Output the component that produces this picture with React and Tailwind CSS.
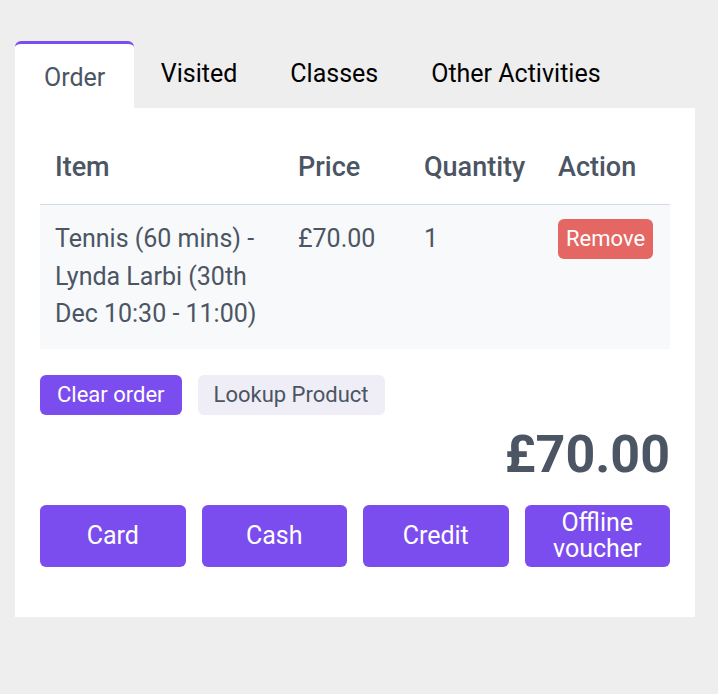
import { useState } from 'react'

const TABS = ['Order', 'Visited', 'Classes', 'Other Activities']
const PAYMENTS = ['Card', 'Cash', 'Credit', 'Offline voucher']

export default function App() {
  const [tab, setTab] = useState('Order')

  return (
    <div className="min-h-[694px] bg-[#eeeeee] pt-[41px] pl-[15px] pr-[23px]" style={{ fontFamily: 'Roboto, "Liberation Sans", sans-serif' }}>
      {/* Tabs */}
      <div className="flex items-end h-[67px]">
        {TABS.map(t => (
          <button
            key={t}
            onClick={() => setTab(t)}
            className={
              tab === t
                ? 'h-[67px] px-[29px] pt-[4px] bg-white border-t-[3px] border-[#7c4dee] rounded-t-[6px] text-[25px] text-[#4b5563]'
                : 'h-[67px] px-[26.5px] pb-[2px] text-[25px] text-black'
            }
          >
            {t}
          </button>
        ))}
      </div>

      {/* Panel */}
      <div className="bg-white px-[25px] pt-[25px] pb-[50px]">
        <table className="w-full border-collapse text-left table-fixed">
          <thead>
            <tr className="border-b border-[#d5dbe3]">
              <th className="w-[258px] pl-[15px] pt-[14px] pb-[16px] text-[27px] font-medium text-[#4b5563] leading-[41px]">Item</th>
              <th className="w-[126px] pt-[14px] pb-[16px] text-[27px] font-medium text-[#4b5563] leading-[41px]">Price</th>
              <th className="w-[134px] pt-[14px] pb-[16px] text-[27px] font-medium text-[#4b5563] leading-[41px]">Quantity</th>
              <th className="pt-[14px] pb-[16px] text-[27px] font-medium text-[#4b5563] leading-[41px]">Action</th>
            </tr>
          </thead>
          <tbody>
            <tr className="bg-[#f8f9fb] align-top text-[25px] text-[#4b5563] leading-[37.5px]">
              <td className="pl-[15px] pr-[10px] pt-[15px] pb-[16px]">Tennis (60 mins) - Lynda Larbi (30th Dec 10:30 - 11:00)</td>
              <td className="pt-[15px]">£70.00</td>
              <td className="pt-[15px]">1</td>
              <td className="pt-[14px]">
                <button className="h-[40px] px-[8px] rounded-[6px] bg-[#e56763] text-white text-[22px] leading-none">Remove</button>
              </td>
            </tr>
          </tbody>
        </table>

        <div className="flex gap-[16px] mt-[26px]">
          <button className="h-[40px] px-[17px] rounded-[6px] bg-[#7c4dee] text-white text-[22px]">Clear order</button>
          <button className="h-[40px] px-[16px] rounded-[6px] bg-[#efedf5] text-[#4b5563] text-[22px]">Lookup Product</button>
        </div>

        <div className="text-right text-[52px] font-bold text-[#4b5563] leading-none mt-[14px]">£70.00</div>

        <div className="grid grid-cols-4 gap-[16px] mt-[24px]">
          {PAYMENTS.map(p => (
            <button key={p} className="h-[62px] rounded-[6px] bg-[#7c4dee] text-white text-[25px] leading-[26px] px-[10px]">
              {p}
            </button>
          ))}
        </div>
      </div>
    </div>
  )
}
